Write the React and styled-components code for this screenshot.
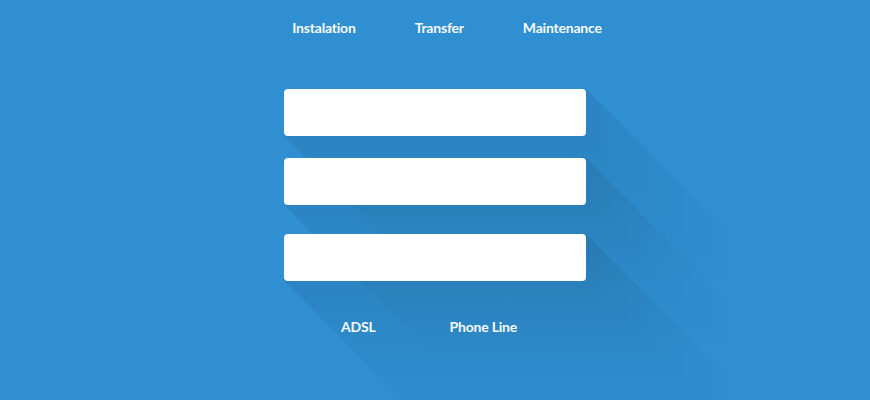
import React from "react";
import styled, { createGlobalStyle } from "styled-components";

const GlobalStyle = createGlobalStyle`
  html, body {
    margin: 0;
    padding: 0;
    background: #2f8fd1;
  }
  body {
    font-family: Lato, "Open Sans", sans-serif;
  }
`;

const Page = styled.div`
  isolation: isolate;
  width: 870px;
  height: 400px;
  overflow: hidden;
  background: #2f8fd1;
  display: flex;
  flex-direction: column;
  align-items: center;
`;

const Menu = styled.nav`
  display: flex;
  justify-content: center;
  gap: ${(p) => p.$gap}px;
  margin-top: ${(p) => p.$top}px;
  padding-left: ${(p) => p.$shift || 0}px;
  padding-right: ${(p) => p.$shiftBack || 0}px;
`;

const MenuLink = styled.a`
  color: #f7fafd;
  font-size: 14px;
  line-height: 14px;
  font-weight: 700;
  letter-spacing: -0.2px;
  text-decoration: none;
  cursor: pointer;
`;

const Form = styled.form`
  display: flex;
  flex-direction: column;
  width: 302px;
  margin-top: 54px;
`;

const SHADOW = "rgba(0, 0, 0, 0.075)";
const LEN = 150;

const Field = styled.div`
  position: relative;
  height: 47px;
  margin-top: ${(p) => p.$gap || 0}px;
  border-radius: 4px;
  background: #fff;

  /* long shadow to the right of the field */
  &::before {
    content: "";
    position: absolute;
    z-index: -1;
    left: 100%;
    top: 0;
    width: ${LEN}px;
    height: calc(100% + ${LEN}px);
    background: linear-gradient(to right, ${SHADOW}, rgba(0, 0, 0, 0));
    clip-path: polygon(0 0, 100% ${LEN}px, 100% 100%, 0 calc(100% - ${LEN}px));
  }

  /* long shadow below the field */
  &::after {
    content: "";
    position: absolute;
    z-index: -1;
    left: 0;
    top: 100%;
    width: calc(100% + ${LEN}px);
    height: ${LEN}px;
    background: linear-gradient(to bottom, ${SHADOW}, rgba(0, 0, 0, 0));
    clip-path: polygon(0 0, calc(100% - ${LEN}px) 0, 100% 100%, ${LEN}px 100%);
  }
`;

const Input = styled.input`
  width: 100%;
  height: 100%;
  box-sizing: border-box;
  border: none;
  border-radius: 4px;
  background: transparent;
  padding: 0 14px;
  font: 15px Lato, sans-serif;
  outline: none;
`;

export default function App() {
  return (
    <>
      <GlobalStyle />
      <Page>
        <Menu $gap={59} $top={21} $shift={24}>
          <MenuLink>Instalation</MenuLink>
          <MenuLink>Transfer</MenuLink>
          <MenuLink>Maintenance</MenuLink>
        </Menu>
        <Form onSubmit={(e) => e.preventDefault()}>
          <Field>
            <Input type="text" aria-label="Name" />
          </Field>
          <Field $gap={22}>
            <Input type="text" aria-label="Phone" />
          </Field>
          <Field $gap={29}>
            <Input type="text" aria-label="Address" />
          </Field>
        </Form>
        <Menu $gap={74} $top={39} $shiftBack={12}>
          <MenuLink>ADSL</MenuLink>
          <MenuLink>Phone Line</MenuLink>
        </Menu>
      </Page>
    </>
  );
}
